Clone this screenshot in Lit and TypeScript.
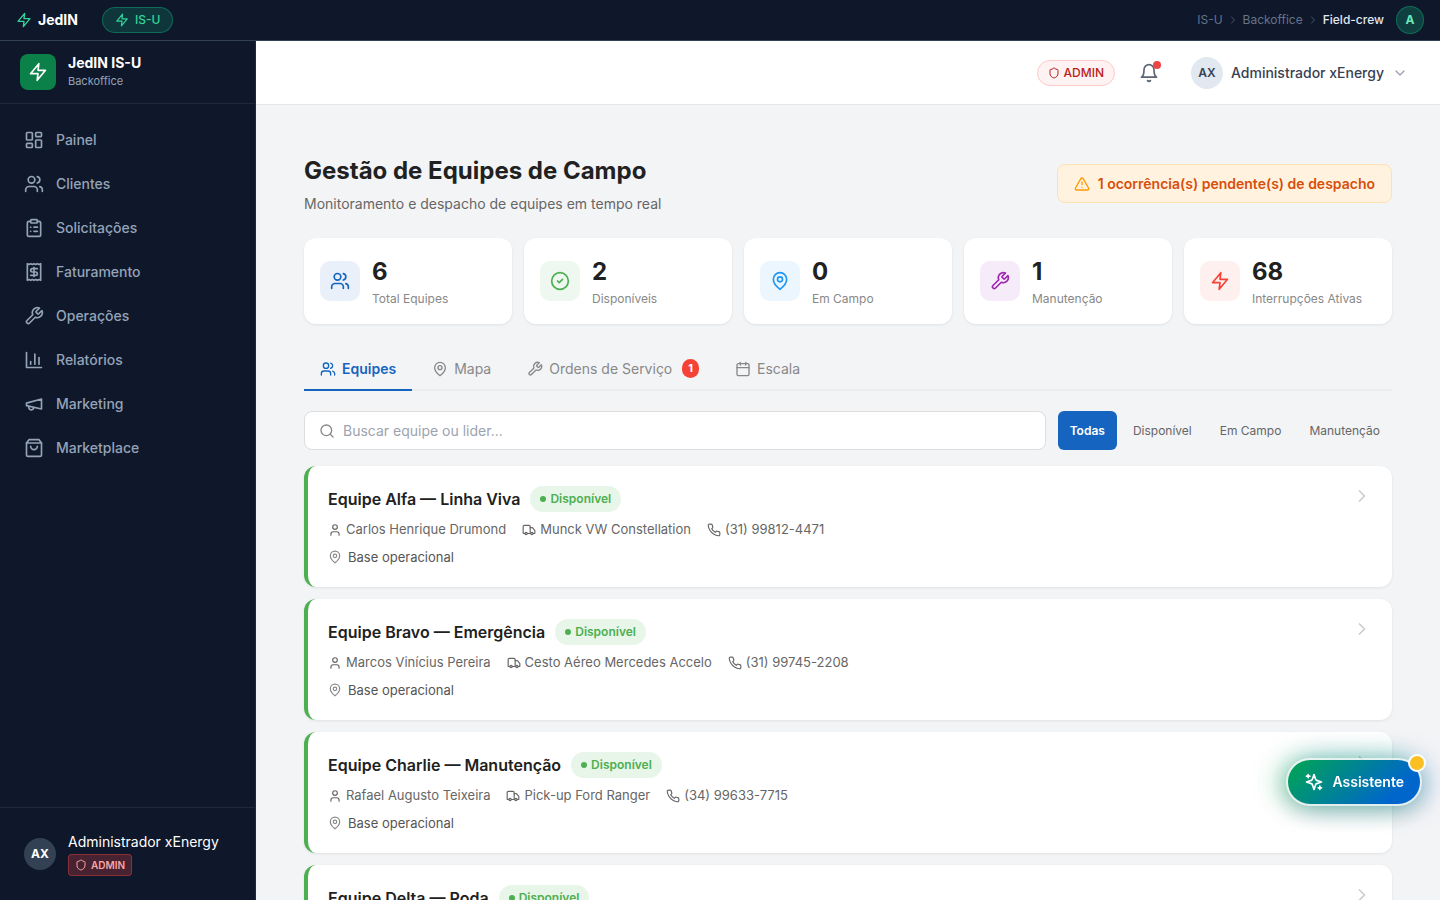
import { LitElement, html, css, svg } from "lit";
import { customElement, property, state } from "lit/decorators.js";
import { classMap } from "lit/directives/class-map.js";

const ICONS: Record<string, unknown> = {
  zap: svg`<polygon points="13 2 3 14 12 14 11 22 21 10 12 10 13 2"/>`,
  dashboard: svg`<rect x="3" y="3" width="7" height="9" rx="1"/><rect x="14" y="3" width="7" height="5" rx="1"/><rect x="14" y="12" width="7" height="9" rx="1"/><rect x="3" y="16" width="7" height="5" rx="1"/>`,
  users: svg`<path d="M16 21v-2a4 4 0 0 0-4-4H6a4 4 0 0 0-4 4v2"/><circle cx="9" cy="7" r="4"/><path d="M22 21v-2a4 4 0 0 0-3-3.87"/><path d="M16 3.13a4 4 0 0 1 0 7.75"/>`,
  clipboard: svg`<rect x="8" y="2" width="8" height="4" rx="1"/><path d="M16 4h2a2 2 0 0 1 2 2v14a2 2 0 0 1-2 2H6a2 2 0 0 1-2-2V6a2 2 0 0 1 2-2h2"/><path d="M12 11h4"/><path d="M12 16h4"/><path d="M8 11h.01"/><path d="M8 16h.01"/>`,
  receipt: svg`<path d="M4 2v20l2-1 2 1 2-1 2 1 2-1 2 1 2-1 2 1V2l-2 1-2-1-2 1-2-1-2 1-2-1-2 1Z"/><path d="M16 8h-6a2 2 0 1 0 0 4h4a2 2 0 1 1 0 4H8"/><path d="M12 17.5v-11"/>`,
  wrench: svg`<path d="M14.7 6.3a1 1 0 0 0 0 1.4l1.6 1.6a1 1 0 0 0 1.4 0l3.77-3.77a6 6 0 0 1-7.94 7.94l-6.91 6.91a2.12 2.12 0 0 1-3-3l6.91-6.91a6 6 0 0 1 7.94-7.94l-3.76 3.76z"/>`,
  chart: svg`<path d="M3 3v18h18"/><path d="M18 17V9"/><path d="M13 17V5"/><path d="M8 17v-3"/>`,
  megaphone: svg`<path d="m3 11 18-5v12L3 14v-3z"/><path d="M11.6 16.8a3 3 0 1 1-5.8-1.6"/>`,
  bag: svg`<path d="M6 2 3 6v14a2 2 0 0 0 2 2h14a2 2 0 0 0 2-2V6l-3-4Z"/><path d="M3 6h18"/><path d="M16 10a4 4 0 0 1-8 0"/>`,
  shield: svg`<path d="M20 13c0 5-3.5 7.5-7.66 8.95a1 1 0 0 1-.67-.01C7.5 20.5 4 18 4 13V6a1 1 0 0 1 1-1c2 0 4.5-1.2 6.24-2.72a1.17 1.17 0 0 1 1.52 0C14.51 3.81 17 5 19 5a1 1 0 0 1 1 1z"/>`,
  bell: svg`<path d="M6 8a6 6 0 0 1 12 0c0 7 3 9 3 9H3s3-2 3-9"/><path d="M10.3 21a1.94 1.94 0 0 0 3.4 0"/>`,
  down: svg`<path d="m6 9 6 6 6-6"/>`,
  right: svg`<path d="m9 18 6-6-6-6"/>`,
  alert: svg`<path d="m21.73 18-8-14a2 2 0 0 0-3.48 0l-8 14A2 2 0 0 0 4 21h16a2 2 0 0 0 1.73-3Z"/><path d="M12 9v4"/><path d="M12 17h.01"/>`,
  check: svg`<circle cx="12" cy="12" r="10"/><path d="m9 12 2 2 4-4"/>`,
  pin: svg`<path d="M20 10c0 6-8 12-8 12s-8-6-8-12a8 8 0 0 1 16 0Z"/><circle cx="12" cy="10" r="3"/>`,
  calendar: svg`<rect x="3" y="4" width="18" height="18" rx="2"/><path d="M16 2v4"/><path d="M8 2v4"/><path d="M3 10h18"/>`,
  search: svg`<circle cx="11" cy="11" r="8"/><path d="m21 21-4.3-4.3"/>`,
  user: svg`<path d="M19 21v-2a4 4 0 0 0-4-4H9a4 4 0 0 0-4 4v2"/><circle cx="12" cy="7" r="4"/>`,
  truck: svg`<path d="M14 18V6a2 2 0 0 0-2-2H4a2 2 0 0 0-2 2v11a1 1 0 0 0 1 1h2"/><path d="M15 18H9"/><path d="M19 18h2a1 1 0 0 0 1-1v-3.65a1 1 0 0 0-.22-.624l-3.48-4.35A1 1 0 0 0 17.52 8H14"/><circle cx="17" cy="18" r="2"/><circle cx="7" cy="18" r="2"/>`,
  phone: svg`<path d="M22 16.92v3a2 2 0 0 1-2.18 2 19.79 19.79 0 0 1-8.63-3.07 19.5 19.5 0 0 1-6-6 19.79 19.79 0 0 1-3.07-8.67A2 2 0 0 1 4.11 2h3a2 2 0 0 1 2 1.72 12.84 12.84 0 0 0 .7 2.81 2 2 0 0 1-.45 2.11L8.09 9.91a16 16 0 0 0 6 6l1.27-1.27a2 2 0 0 1 2.11-.45 12.84 12.84 0 0 0 2.81.7A2 2 0 0 1 22 16.92z"/>`,
  sparkles: svg`<path d="m12 3-1.912 5.813a2 2 0 0 1-1.275 1.275L3 12l5.813 1.912a2 2 0 0 1 1.275 1.275L12 21l1.912-5.813a2 2 0 0 1 1.275-1.275L21 12l-5.813-1.912a2 2 0 0 1-1.275-1.275L12 3Z"/><path d="M5 3v4"/><path d="M19 17v4"/><path d="M3 5h4"/><path d="M17 19h4"/>`,
};

@customElement("ui-icon")
class UiIcon extends LitElement {
  @property() name = "";
  @property({ type: Number }) size = 16;
  static styles = css`
    :host { display: inline-flex; flex: none; }
    .icon {
      display: block;
      fill: none;
      stroke: currentColor;
      stroke-width: 2;
      stroke-linecap: round;
      stroke-linejoin: round;
    }
  `;
  render() {
    return html`<svg class="icon" width=${this.size} height=${this.size} viewBox="0 0 24 24" aria-hidden="true">${ICONS[this.name]}</svg>`;
  }
}

interface Team {
  name: string;
  leader?: string;
  vehicle?: string;
  phone?: string;
}

const TEAMS: Team[] = [
  { name: "Equipe Alfa — Linha Viva", leader: "Carlos Henrique Drumond", vehicle: "Munck VW Constellation", phone: "(31) 99812-4471" },
  { name: "Equipe Bravo — Emergência", leader: "Marcos Vinícius Pereira", vehicle: "Cesto Aéreo Mercedes Accelo", phone: "(31) 99745-2208" },
  { name: "Equipe Charlie — Manutenção", leader: "Rafael Augusto Teixeira", vehicle: "Pick-up Ford Ranger", phone: "(34) 99633-7715" },
  { name: "Equipe Delta — Poda" },
];

@customElement("team-card")
class TeamCard extends LitElement {
  @property({ attribute: false }) team!: Team;
  static styles = css`
    :host { display: block; }
    .card {
      display: flex;
      align-items: flex-start;
      justify-content: space-between;
      padding: 20px;
      background: #fff;
      border-left: 4px solid #4caf50;
      border-radius: 12px;
      box-shadow: 0 1px 3px rgba(0, 0, 0, 0.08);
    }
    .body { display: flex; flex-direction: column; gap: 8px; }
    .head { display: flex; align-items: center; gap: 10px; }
    .name { margin: 0; font-size: 16px; font-weight: 600; color: #212121; }
    .status {
      display: inline-flex;
      align-items: center;
      gap: 4px;
      padding: 4px 10px;
      border-radius: 20px;
      background: #e8f5e9;
      color: #4caf50;
      font-size: 12px;
      font-weight: 600;
    }
    .dot { width: 6px; height: 6px; border-radius: 50%; background: #4caf50; }
    .meta { display: flex; flex-wrap: wrap; gap: 16px; font-size: 13px; color: #666; }
    .item { display: inline-flex; align-items: center; gap: 4px; }
    .place { display: flex; align-items: center; gap: 6px; font-size: 13px; color: #555; }
    .place ui-icon { color: #888; }
    .go { color: #ccc; }
  `;
  render() {
    const t = this.team;
    return html`<article class="card">
      <div class="body">
        <div class="head">
          <h2 class="name">${t.name}</h2>
          <span class="status"><span class="dot"></span>Disponível</span>
        </div>
        ${t.leader
          ? html`<div class="meta">
              <span class="item"><ui-icon name="user" size="14"></ui-icon>${t.leader}</span>
              <span class="item"><ui-icon name="truck" size="14"></ui-icon>${t.vehicle}</span>
              <span class="item"><ui-icon name="phone" size="14"></ui-icon>${t.phone}</span>
            </div>`
          : ""}
        <div class="place"><ui-icon name="pin" size="14"></ui-icon>Base operacional</div>
      </div>
      <ui-icon class="go" name="right" size="20"></ui-icon>
    </article>`;
  }
}

const NAV = [
  ["dashboard", "Painel"],
  ["users", "Clientes"],
  ["clipboard", "Solicitações"],
  ["receipt", "Faturamento"],
  ["wrench", "Operações"],
  ["chart", "Relatórios"],
  ["megaphone", "Marketing"],
  ["bag", "Marketplace"],
];

const STATS = [
  ["users", "blue", "6", "Total Equipes"],
  ["check", "green", "2", "Disponíveis"],
  ["pin", "sky", "0", "Em Campo"],
  ["wrench", "purple", "1", "Manutenção"],
  ["zap", "red", "68", "Interrupções Ativas"],
];

const TABS: { icon: string; label: string; count?: number }[] = [
  { icon: "users", label: "Equipes" },
  { icon: "pin", label: "Mapa" },
  { icon: "wrench", label: "Ordens de Serviço", count: 1 },
  { icon: "calendar", label: "Escala" },
];

const FILTERS = ["Todas", "Disponível", "Em Campo", "Manutenção"];

@customElement("app-root")
class AppRoot extends LitElement {
  @state() private tab = "Equipes";
  @state() private filter = "Todas";

  static styles = css`
    :host {
      display: flex;
      flex-direction: column;
      height: 100vh;
      font-family: Inter, "Noto Sans", sans-serif;
      font-size: 14px;
      line-height: 1.5;
      color: #212121;
      background: #f3f4f6;
    }
    * { box-sizing: border-box; }
    button, input { font: inherit; color: inherit; margin: 0; }
    button { border: 0; background: none; padding: 0; cursor: pointer; }
    a { color: inherit; text-decoration: none; }

    .topbar {
      flex: none;
      display: flex;
      align-items: center;
      justify-content: space-between;
      padding: 6px 16px;
      background: #0f172a;
      border-bottom: 1px solid #334155;
    }
    .top-left { display: flex; align-items: center; gap: 24px; }
    .brand { display: flex; align-items: center; gap: 6px; font-weight: 700; line-height: 20px; color: #fff; }
    .brand ui-icon { color: #34d399; }
    .module {
      display: flex;
      align-items: center;
      gap: 6px;
      padding: 3px 12px;
      border: 1px solid rgba(16, 185, 129, 0.4);
      border-radius: 20px;
      background: rgba(16, 185, 129, 0.2);
      color: #34d399;
      font-size: 12px;
      font-weight: 500;
    }
    .top-right { display: flex; align-items: center; gap: 12px; }
    .crumbs { display: flex; align-items: center; gap: 4px; font-size: 12px; color: #64748b; }
    .crumbs ui-icon { color: #475569; }
    .crumbs .current { color: #e2e8f0; font-weight: 500; }
    .account {
      display: grid;
      place-items: center;
      width: 28px;
      height: 28px;
      border: 1px solid rgba(16, 185, 129, 0.4);
      border-radius: 50%;
      background: rgba(16, 185, 129, 0.25);
      color: #6ee7b7;
      font-size: 12px;
      font-weight: 700;
    }

    .shell { flex: 1; min-height: 0; display: flex; }
    .sidebar {
      flex: none;
      display: flex;
      flex-direction: column;
      width: 256px;
      background: #0f172a;
      border-right: 1px solid #1e293b;
    }
    .product {
      display: flex;
      align-items: center;
      gap: 12px;
      padding: 13px 20px;
      border-bottom: 1px solid #1e293b;
    }
    .logo {
      display: grid;
      place-items: center;
      width: 36px;
      height: 36px;
      border-radius: 8px;
      background: #0b8048;
      color: #fff;
    }
    .product-text { display: flex; flex-direction: column; line-height: 18px; }
    .product-name { font-weight: 700; color: #fff; }
    .product-sub { font-size: 11px; color: #94a3b8; }
    .nav { flex: 1; display: flex; flex-direction: column; gap: 4px; padding: 16px 12px; }
    .nav-item {
      display: flex;
      align-items: center;
      gap: 12px;
      padding: 10px 12px;
      font-weight: 500;
      line-height: 20px;
      color: #94a3b8;
    }
    .person {
      display: flex;
      align-items: center;
      gap: 12px;
      padding: 24px;
      border-top: 1px solid #1e293b;
    }
    .avatar {
      display: grid;
      place-items: center;
      width: 32px;
      height: 32px;
      border-radius: 50%;
      font-size: 12px;
      font-weight: 600;
      background: #e2e8f0;
      color: #334155;
    }
    .avatar.dark { background: #334155; color: #fff; font-weight: 700; }
    .person-text { display: flex; flex-direction: column; align-items: flex-start; gap: 2px; line-height: 20px; }
    .person-name { color: #fff; }
    .role {
      display: inline-flex;
      align-items: center;
      gap: 4px;
      padding: 2px 6px;
      border: 1px solid rgba(239, 68, 68, 0.4);
      border-radius: 4px;
      background: rgba(239, 68, 68, 0.25);
      color: #fca5a5;
      font-size: 10px;
      font-weight: 600;
      line-height: 16px;
    }

    .content { flex: 1; min-width: 0; display: flex; flex-direction: column; }
    .header {
      flex: none;
      display: flex;
      align-items: center;
      justify-content: flex-end;
      gap: 16px;
      height: 64px;
      padding: 0 32px;
      background: #fff;
      border-bottom: 1px solid #e5e7eb;
    }
    .admin {
      display: inline-flex;
      align-items: center;
      gap: 4px;
      padding: 3px 10px;
      border: 1px solid #fecaca;
      border-radius: 20px;
      background: #fef2f2;
      color: #b91c1c;
      font-size: 12px;
      font-weight: 500;
    }
    .bell { position: relative; display: flex; padding: 8px; color: #5b6472; }
    .bell-dot {
      position: absolute;
      top: 6px;
      right: 6px;
      width: 8px;
      height: 8px;
      border-radius: 50%;
      background: #ef4444;
    }
    .user { display: flex; align-items: center; gap: 8px; padding-left: 8px; font-weight: 500; color: #374151; }
    .user ui-icon { color: #9ca3af; }

    .page { flex: 1; overflow-y: auto; scrollbar-width: none; padding: 48px; }
    .page-head { display: flex; align-items: center; justify-content: space-between; margin-bottom: 24px; }
    .title { margin: 0 0 4px; font-size: 24px; font-weight: 700; }
    .subtitle { margin: 0; color: #666; }
    .alert {
      display: flex;
      align-items: center;
      gap: 8px;
      padding: 8px 16px;
      border: 1px solid #ffe0b2;
      border-radius: 8px;
      background: #fff3e0;
      color: #d84f0b;
      font-weight: 600;
    }
    .alert ui-icon { color: #ff9800; }

    .stats { display: grid; grid-template-columns: repeat(5, 1fr); gap: 12px; margin-bottom: 24px; }
    .stat {
      display: flex;
      align-items: center;
      gap: 12px;
      padding: 16px;
      border-radius: 12px;
      background: #fff;
      box-shadow: 0 1px 3px rgba(0, 0, 0, 0.08);
    }
    .stat-icon { display: grid; place-items: center; width: 40px; height: 40px; border-radius: 10px; }
    .blue { color: #1565c0; background: #e9f0f9; }
    .green { color: #4caf50; background: #eff8f0; }
    .sky { color: #2196f3; background: #ebf6fe; }
    .purple { color: #9c27b0; background: #f6ebf8; }
    .red { color: #f44336; background: #fef0ef; }
    .stat-value { font-size: 24px; font-weight: 700; }
    .stat-label { font-size: 12px; color: #888; }

    .tabs { display: flex; gap: 4px; margin-bottom: 20px; box-shadow: inset 0 -2px #eaecee; }
    .tab {
      display: flex;
      align-items: center;
      gap: 6px;
      padding: 10px 16px;
      border-bottom: 2px solid transparent;
      color: #888;
    }
    .tab.active { border-color: #1565c0; color: #1565c0; font-weight: 600; }
    .count {
      margin-left: 4px;
      padding: 1px 6px;
      border-radius: 10px;
      background: #f44336;
      color: #fff;
      font-size: 11px;
      font-weight: 700;
      line-height: 17px;
    }

    .tools { display: flex; gap: 12px; margin-bottom: 16px; }
    .search {
      flex: 1;
      display: flex;
      align-items: center;
      gap: 8px;
      padding: 8px 14px;
      border: 1px solid #ddd;
      border-radius: 8px;
      background: #fff;
      color: #888;
    }
    .search-input { flex: 1; min-width: 0; height: 21px; padding: 0; border: 0; outline: 0; background: none; color: #212121; }
    .search-input::placeholder { color: #9ca3af; opacity: 1; }
    .filters { display: flex; gap: 4px; }
    .filter { padding: 0 12px; border-radius: 6px; font-size: 12px; color: #666; }
    .filter.active { background: #1565c0; color: #fff; font-weight: 600; }
    .teams { display: flex; flex-direction: column; gap: 12px; }

    .assistant {
      position: fixed;
      right: 20px;
      bottom: 96px;
      display: flex;
      align-items: center;
      gap: 8px;
      height: 44px;
      padding: 0 16px;
      border-radius: 22px;
      background: linear-gradient(135deg, #00a651 0%, #0066cc 80%);
      color: #fff;
      font-weight: 600;
      line-height: 20px;
      box-shadow:
        0 0 0 2px rgba(255, 255, 255, 0.7),
        -8px 0 28px rgba(0, 166, 81, 0.45),
        8px 0 28px rgba(0, 102, 204, 0.35),
        0 8px 24px rgba(0, 0, 0, 0.16);
    }
    .assistant-dot {
      position: absolute;
      top: -6px;
      right: -6px;
      width: 18px;
      height: 18px;
      border: 2px solid #fff;
      border-radius: 50%;
      background: #fbbf24;
    }
  `;

  render() {
    return html`
      <header class="topbar">
        <div class="top-left">
          <a class="brand" href="#"><ui-icon name="zap" size="16"></ui-icon>JedIN</a>
          <a class="module" href="#"><ui-icon name="zap" size="14"></ui-icon>IS-U</a>
        </div>
        <div class="top-right">
          <nav class="crumbs" aria-label="Trilha">
            <a href="#">IS-U</a><ui-icon name="right" size="12"></ui-icon>
            <a href="#">Backoffice</a><ui-icon name="right" size="12"></ui-icon>
            <span class="current">Field-crew</span>
          </nav>
          <button class="account">A</button>
        </div>
      </header>
      <div class="shell">
        <aside class="sidebar">
          <div class="product">
            <span class="logo"><ui-icon name="zap" size="20"></ui-icon></span>
            <div class="product-text">
              <span class="product-name">JedIN IS-U</span>
              <span class="product-sub">Backoffice</span>
            </div>
          </div>
          <nav class="nav">
            ${NAV.map(([icon, label]) => html`<a class="nav-item" href="#"><ui-icon name=${icon} size="20"></ui-icon>${label}</a>`)}
          </nav>
          <div class="person">
            <span class="avatar dark">AX</span>
            <div class="person-text">
              <span class="person-name">Administrador xEnergy</span>
              <span class="role"><ui-icon name="shield" size="12"></ui-icon>ADMIN</span>
            </div>
          </div>
        </aside>
        <div class="content">
          <div class="header">
            <span class="admin"><ui-icon name="shield" size="12"></ui-icon>ADMIN</span>
            <button class="bell" aria-label="Notificações"><ui-icon name="bell" size="20"></ui-icon><span class="bell-dot"></span></button>
            <button class="user"><span class="avatar">AX</span>Administrador xEnergy<ui-icon name="down" size="16"></ui-icon></button>
          </div>
          <main class="page">
            <div class="page-head">
              <div>
                <h1 class="title">Gestão de Equipes de Campo</h1>
                <p class="subtitle">Monitoramento e despacho de equipes em tempo real</p>
              </div>
              <div class="alert"><ui-icon name="alert" size="16"></ui-icon>1 ocorrência(s) pendente(s) de despacho</div>
            </div>
            <section class="stats">
              ${STATS.map(
                ([icon, tone, value, label]) => html`<div class="stat">
                  <span class="stat-icon ${tone}"><ui-icon name=${icon} size="20"></ui-icon></span>
                  <div>
                    <div class="stat-value">${value}</div>
                    <div class="stat-label">${label}</div>
                  </div>
                </div>`
              )}
            </section>
            <div class="tabs" role="tablist">
              ${TABS.map(
                (t) => html`<button
                  role="tab"
                  aria-selected=${this.tab === t.label}
                  class=${classMap({ tab: true, active: this.tab === t.label })}
                  @click=${() => (this.tab = t.label)}
                ><ui-icon name=${t.icon} size="16"></ui-icon>${t.label}${t.count ? html`<span class="count">${t.count}</span>` : ""}</button>`
              )}
            </div>
            <div class="tools">
              <label class="search">
                <ui-icon name="search" size="16"></ui-icon>
                <input class="search-input" type="text" aria-label="Buscar equipe" placeholder="Buscar equipe ou lider..." />
              </label>
              <div class="filters">
                ${FILTERS.map(
                  (f) => html`<button class=${classMap({ filter: true, active: this.filter === f })} @click=${() => (this.filter = f)}>${f}</button>`
                )}
              </div>
            </div>
            <section class="teams">${TEAMS.map((t) => html`<team-card .team=${t}></team-card>`)}</section>
          </main>
        </div>
      </div>
      <button class="assistant"><ui-icon name="sparkles" size="20"></ui-icon>Assistente<span class="assistant-dot"></span></button>
    `;
  }
}
